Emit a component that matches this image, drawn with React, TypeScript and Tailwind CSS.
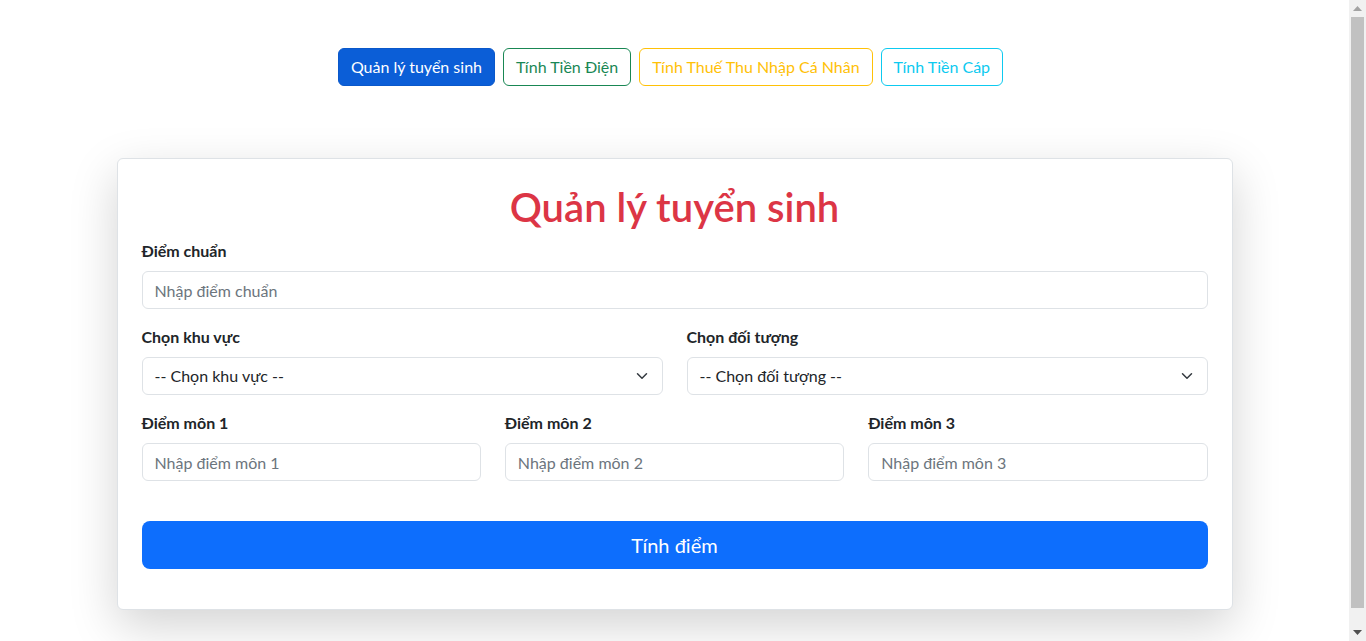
import React from "react";

function Chevron() {
  return (
    <svg width="16" height="12" viewBox="0 0 16 16" className="absolute right-[12px] top-1/2 -translate-y-1/2 pointer-events-none">
      <path d="m2 5 6 6 6-6" fill="none" stroke="#343a40" strokeWidth="2" strokeLinecap="round" strokeLinejoin="round" />
    </svg>
  );
}

function Field({ label, placeholder }: { label: string; placeholder: string }) {
  return (
    <div className="flex flex-col">
      <label className="font-bold text-[16px] leading-[24px] mb-2 text-[#212529]">{label}</label>
      <input
        placeholder={placeholder}
        className="h-[38px] border border-[#dee2e6] rounded-[6px] px-3 text-[16px] text-[#212529] placeholder:text-[#6c757d] outline-none bg-white"
      />
    </div>
  );
}

function SelectField({ label, text }: { label: string; text: string }) {
  return (
    <div className="flex flex-col">
      <label className="font-bold text-[16px] leading-[24px] mb-2 text-[#212529]">{label}</label>
      <div className="relative h-[38px] border border-[#dee2e6] rounded-[6px] px-3 flex items-center text-[16px] text-[#212529] bg-white">
        {text}
        <Chevron />
      </div>
    </div>
  );
}

function Scrollbar() {
  return (
    <div className="w-[17px] shrink-0 h-full bg-[#f1f1f1] flex flex-col items-center">
      <div className="h-[17px] w-full flex items-center justify-center">
        <svg width="9" height="5" viewBox="0 0 9 5"><path d="M0 5 4.5 0 9 5Z" fill="#a3a3a3" /></svg>
      </div>
      <div className="w-[13px] flex-1 bg-[#c1c1c1] mb-[16px]" />
      <div className="h-[17px] w-full flex items-center justify-center">
        <svg width="9" height="5" viewBox="0 0 9 5"><path d="M0 0 4.5 5 9 0Z" fill="#505050" /></svg>
      </div>
    </div>
  );
}

export default function App() {
  return (
    <div className="h-screen overflow-hidden flex bg-white text-[#212529] font-['Lato',sans-serif]">
      <div className="flex-1 min-w-0 pb-12">
        <div className="pt-12 flex justify-center">
          <button className="mr-2 h-[38px] px-3 rounded-[6px] border border-[#0a58ca] bg-[#0b5ed7] text-white text-[16px]">Quản lý tuyển sinh</button>
          <button className="mr-2 h-[38px] px-3 rounded-[6px] border border-[#198754] text-[#198754] bg-white text-[16px]">Tính Tiền Điện</button>
          <button className="mr-2 h-[38px] px-3 rounded-[6px] border border-[#ffc107] text-[#ffc107] bg-white text-[16px]">Tính Thuế Thu Nhập Cá Nhân</button>
          <button className="mr-2 h-[38px] px-3 rounded-[6px] border border-[#0dcaf0] text-[#0dcaf0] bg-white text-[16px]">Tính Tiền Cáp</button>
        </div>
        <div className="mt-[72px] mx-auto w-[1116px] border border-[#dee2e6] rounded-[6px] bg-white shadow-[0_1rem_3rem_rgba(0,0,0,0.175)] p-6">
          <h1 className="text-center text-[40px] leading-[48px] font-semibold text-[#dc3545] mb-2">Quản lý tuyển sinh</h1>
          <div className="mb-4">
            <Field label="Điểm chuẩn" placeholder="Nhập điểm chuẩn" />
          </div>
          <div className="grid grid-cols-2 gap-x-6 mb-4">
            <SelectField label="Chọn khu vực" text="-- Chọn khu vực --" />
            <SelectField label="Chọn đối tượng" text="-- Chọn đối tượng --" />
          </div>
          <div className="grid grid-cols-3 gap-x-6 mb-4">
            <Field label="Điểm môn 1" placeholder="Nhập điểm môn 1" />
            <Field label="Điểm môn 2" placeholder="Nhập điểm môn 2" />
            <Field label="Điểm môn 3" placeholder="Nhập điểm môn 3" />
          </div>
          <button className="mt-6 mb-4 w-full h-[48px] rounded-[8px] bg-[#0d6efd] text-white text-[20px]">Tính điểm</button>
        </div>
      </div>
      <Scrollbar />
    </div>
  );
}
